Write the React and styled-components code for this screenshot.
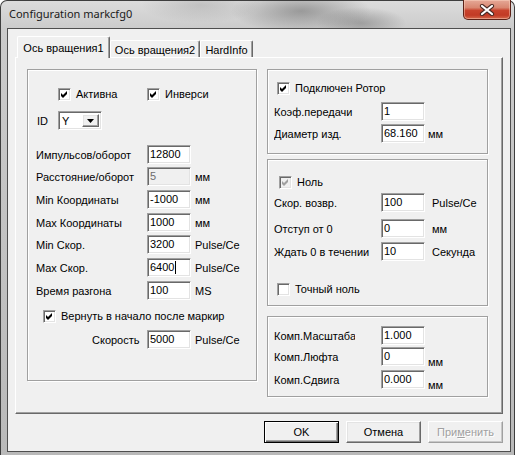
import React from 'react';
import styled, { createGlobalStyle, css } from 'styled-components';

const Global = createGlobalStyle`
  html, body { margin: 0; padding: 0; background: #fff; }
  body { width: 515px; height: 455px; overflow: hidden; }
  *, *::before, *::after { box-sizing: border-box; }
`;

const FONT = `"Liberation Sans", Arial, sans-serif`;

const sunken = css`
  border: 1px solid;
  border-color: #a0a0a0 #ffffff #ffffff #a0a0a0;
  box-shadow: inset 1px 1px 0 #696969, inset -1px -1px 0 #e3e3e3;
`;

const raised = css`
  border: 1px solid;
  border-color: #ffffff #696969 #696969 #ffffff;
  box-shadow: inset -1px -1px 0 #a0a0a0, inset 1px 1px 0 #e3e3e3;
`;

const Window = styled.div`
  width: 515px;
  height: 455px;
  display: flex;
  flex-direction: column;
  border: 1px solid #3e3e3e;
  border-bottom: none;
  border-radius: 7px 7px 0 0;
  padding: 0 3px 3px 6px;
  background:
    radial-gradient(ellipse 70px 22px at 300px 10px, rgba(80, 80, 80, 0.45), transparent),
    radial-gradient(ellipse 45px 16px at 360px 22px, rgba(70, 70, 70, 0.35), transparent),
    radial-gradient(ellipse 60px 18px at 200px 4px, rgba(120, 120, 120, 0.25), transparent),
    linear-gradient(180deg, #dcdcdc 0px, #cbcbcb 28px, #b9b9b9 455px);
`;

const TitleBar = styled.div`
  height: 27px;
  display: flex;
  align-items: flex-start;
  justify-content: space-between;
  flex-shrink: 0;
`;

const TitleText = styled.div`
  margin: 5px 0 0 2px;
  font-family: "Noto Sans", "Open Sans", sans-serif;
  font-size: 11px;
  line-height: 16px;
  color: #1a1a1a;
`;

const CloseButton = styled.div`
  width: 48px;
  height: 20px;
  margin-top: -1px;
  border: 1px solid #5c2218;
  border-top: none;
  border-radius: 0 0 5px 5px;
  background: linear-gradient(180deg, #e5a897 0%, #d98771 40%, #c8432d 55%, #c23a25 80%, #d4694d 100%);
  box-shadow: inset 0 0 0 1px rgba(255, 220, 200, 0.45);
  display: flex;
  align-items: center;
  justify-content: center;
`;

const Client = styled.div`
  flex: 1;
  display: flex;
  flex-direction: column;
  background: #f0f0f0;
  border: 1px solid #4e4e4e;
  padding: 7px 7px 0 7px;
`;

const TabStrip = styled.div`
  display: flex;
  align-items: flex-end;
  height: 21px;
  padding-left: 2px;
  position: relative;
  z-index: 1;
`;

const Tab = styled.div`
  width: ${p => p.$w}px;
  height: ${p => (p.$active ? 22 : 17)}px;
  margin-bottom: ${p => (p.$active ? -1 : 0)}px;
  background: #f0f0f0;
  border-top: 1px solid #ffffff;
  border-left: 1px solid #ffffff;
  border-right: 1px solid #696969;
  box-shadow: inset -1px 0 0 #a0a0a0;
  border-radius: 2px 2px 0 0;
  display: flex;
  align-items: center;
  justify-content: center;
  padding-top: ${p => (p.$active ? 0 : 1)}px;
  font-family: ${FONT};
  font-size: 11px;
  color: #000;
  white-space: nowrap;
`;

const Panel = styled.div`
  height: 357px;
  display: flex;
  gap: 10px;
  padding: 11px 0 0 11px;
  border: 1px solid;
  border-color: #ffffff #696969 #696969 #ffffff;
  box-shadow: inset -1px -1px 0 #a0a0a0;
`;

const Group = styled.div`
  width: ${p => p.$w}px;
  height: ${p => p.$h}px;
  border: 1px solid #a0a0a0;
  box-shadow: inset 1px 1px 0 #ffffff, 1px 1px 0 #ffffff;
  display: flex;
  flex-direction: column;
  flex-shrink: 0;
  font-family: ${FONT};
  font-size: 11px;
  color: #000;
`;

const RightColumn = styled.div`
  display: flex;
  flex-direction: column;
`;

const Spacer = styled.div`
  height: ${p => p.$h}px;
  flex-shrink: 0;
`;

const CheckLine = styled.div`
  display: grid;
  grid-template-columns: ${p => p.$cols || 'auto'};
  margin-top: ${p => p.$mt}px;
  padding-left: ${p => p.$pl}px;
  height: 13px;
  align-items: center;
`;

const CheckItem = styled.div`
  display: flex;
  align-items: center;
  gap: 5px;
  white-space: nowrap;
  line-height: 13px;
`;

const Box = styled.div`
  width: 13px;
  height: 13px;
  ${sunken};
  background: ${p => (p.$disabled ? '#f0f0f0' : '#ffffff')};
  display: flex;
  align-items: center;
  justify-content: center;
  flex-shrink: 0;
`;

const Row = styled.div`
  display: grid;
  grid-template-columns: ${p => p.$label}px 44px auto;
  align-items: center;
  height: 19px;
  margin-top: ${p => p.$mt}px;
  padding-left: ${p => p.$pl}px;
  white-space: nowrap;
`;

const Label = styled.span`
  overflow: hidden;
  width: ${p => (p.$clip ? `${p.$clip}px` : 'auto')};
`;

const Field = styled.div`
  width: 44px;
  height: 19px;
  ${sunken};
  background: ${p => (p.$disabled ? '#f0f0f0' : '#ffffff')};
  color: ${p => (p.$disabled ? '#6d6d6d' : '#000')};
  display: flex;
  align-items: center;
  padding: 0 0 0 2px;
  overflow: hidden;
  line-height: 13px;
`;

const Caret = styled.span`
  display: inline-block;
  width: 1px;
  height: 13px;
  background: #000;
  margin-left: 1px;
`;

const Unit = styled.span`
  margin-left: ${p => p.$ml}px;
  align-self: ${p => (p.$low ? 'end' : 'center')};
  margin-bottom: ${p => (p.$low ? -2 : 0)}px;
`;

const IdRow = styled.div`
  display: grid;
  grid-template-columns: 21px 44px;
  align-items: center;
  height: 19px;
  margin-top: ${p => p.$mt}px;
  padding-left: 9px;
`;

const Combo = styled.div`
  width: 44px;
  height: 19px;
  ${sunken};
  background: #fff;
  display: flex;
  align-items: stretch;
  padding: 2px;
`;

const ComboText = styled.span`
  flex: 1;
  line-height: 15px;
  padding-left: 1px;
`;

const ComboButton = styled.div`
  width: 17px;
  background: #f0f0f0;
  ${raised};
  display: flex;
  align-items: center;
  justify-content: center;
`;

const ButtonBar = styled.div`
  display: flex;
  justify-content: flex-end;
  gap: 7px;
  margin-top: 7px;
`;

const Button = styled.div`
  width: 75px;
  height: 22px;
  background: #f0f0f0;
  display: flex;
  align-items: center;
  justify-content: center;
  font-family: ${FONT};
  font-size: 11px;
  color: ${p => (p.$disabled ? '#a0a0a0' : '#000')};
  text-shadow: ${p => (p.$disabled ? '1px 1px 0 #ffffff' : 'none')};
  ${raised};
  ${p => p.$default && css`
    border: 1px solid #000;
    box-shadow: inset 1px 1px 0 #ffffff, inset -1px -1px 0 #696969, inset -2px -2px 0 #a0a0a0;
  `}
  ${p => p.$disabled && css`
    border-color: #ffffff #a0a0a0 #a0a0a0 #ffffff;
    box-shadow: inset -1px -1px 0 #c8c8c8;
  `}
`;

const Underlined = styled.span`
  text-decoration: underline;
`;

const CheckMark = ({ color = '#000' }) => (
  <svg width="9" height="9" viewBox="0 0 9 9">
    <polygon points="1,3 3,5 7,1 7,4 3,8 1,6" fill={color} />
  </svg>
);

const Check = ({ checked, disabled, children }) => (
  <CheckItem>
    <Box $disabled={disabled}>{checked && <CheckMark color={disabled ? '#a0a0a0' : '#000'} />}</Box>
    <span>{children}</span>
  </CheckItem>
);

const CloseX = () => (
  <svg width="16" height="12" viewBox="0 0 16 12">
    <path d="M3 2 L13 10 M13 2 L3 10" stroke="#4a2a24" strokeWidth="4.2" strokeLinecap="round" />
    <path d="M3 2 L13 10 M13 2 L3 10" stroke="#ffffff" strokeWidth="2.2" strokeLinecap="round" />
  </svg>
);

const Arrow = () => (
  <svg width="7" height="4" viewBox="0 0 7 4">
    <polygon points="0,0 7,0 3.5,4" fill="#000" />
  </svg>
);

const leftRows = [
  { label: 'Импульсов/оборот', value: '12800', mt: 15 },
  { label: 'Расстояние/оборот', value: '5', unit: 'мм', mt: 3, disabled: true },
  { label: 'Min Координаты', value: '-1000', unit: 'мм', mt: 4 },
  { label: 'Max Координаты', value: '1000', unit: 'мм', mt: 4 },
  { label: 'Min Скор.', value: '3200', unit: 'Pulse/Ce', mt: 3 },
  { label: 'Max Скор.', value: '6400', unit: 'Pulse/Ce', mt: 4, caret: true },
  { label: 'Время разгона', value: '100', unit: 'MS', mt: 4 },
];

export default function App() {
  return (
    <>
      <Global />
      <Window>
        <TitleBar>
          <TitleText>Configuration markcfg0</TitleText>
          <CloseButton><CloseX /></CloseButton>
        </TitleBar>
        <Client>
          <TabStrip>
            <Tab $w={93} $active>Ось вращения1</Tab>
            <Tab $w={90}>Ось вращения2</Tab>
            <Tab $w={53}>HardInfo</Tab>
          </TabStrip>
          <Panel>
            <Group $w={230} $h={312}>
              <CheckLine $mt={18} $pl={30} $cols="89px auto">
                <Check checked>Активна</Check>
                <Check checked>Инверси</Check>
              </CheckLine>
              <IdRow $mt={10}>
                <span>ID</span>
                <Combo>
                  <ComboText>Y</ComboText>
                  <ComboButton><Arrow /></ComboButton>
                </Combo>
              </IdRow>
              {leftRows.map(r => (
                <Row key={r.label} $label={111} $pl={8} $mt={r.mt}>
                  <Label>{r.label}</Label>
                  <Field $disabled={r.disabled}>
                    {r.value}
                    {r.caret && <Caret />}
                  </Field>
                  {r.unit && <Unit $ml={4}>{r.unit}</Unit>}
                </Row>
              ))}
              <CheckLine $mt={10} $pl={15}>
                <Check checked>Вернуть в начало после маркир</Check>
              </CheckLine>
              <Row $label={55} $pl={64} $mt={7}>
                <Label>Скорость</Label>
                <Field>5000</Field>
                <Unit $ml={4}>Pulse/Ce</Unit>
              </Row>
            </Group>
            <RightColumn>
              <Group $w={221} $h={85}>
                <CheckLine $mt={12} $pl={9}>
                  <Check checked>Подключен Ротор</Check>
                </CheckLine>
                <Row $label={107} $pl={6} $mt={7}>
                  <Label>Коэф.передачи</Label>
                  <Field>1</Field>
                </Row>
                <Row $label={107} $pl={6} $mt={3}>
                  <Label>Диаметр изд.</Label>
                  <Field>68.160</Field>
                  <Unit $ml={3}>мм</Unit>
                </Row>
              </Group>
              <Spacer $h={5} />
              <Group $w={221} $h={147}>
                <CheckLine $mt={16} $pl={11}>
                  <Check checked disabled>Ноль</Check>
                </CheckLine>
                <Row $label={107} $pl={6} $mt={4}>
                  <Label>Скор. возвр.</Label>
                  <Field>100</Field>
                  <Unit $ml={7}>Pulse/Ce</Unit>
                </Row>
                <Row $label={107} $pl={6} $mt={7}>
                  <Label>Отступ от 0</Label>
                  <Field>0</Field>
                  <Unit $ml={7}>мм</Unit>
                </Row>
                <Row $label={107} $pl={6} $mt={4}>
                  <Label>Ждать 0 в течении</Label>
                  <Field>10</Field>
                  <Unit $ml={7}>Секунда</Unit>
                </Row>
                <CheckLine $mt={22} $pl={9}>
                  <Check>Точный ноль</Check>
                </CheckLine>
              </Group>
              <Spacer $h={10} />
              <Group $w={221} $h={81}>
                <Row $label={107} $pl={6} $mt={9}>
                  <Label $clip={81}>Комп.Масштаба</Label>
                  <Field>1.000</Field>
                </Row>
                <Row $label={107} $pl={6} $mt={2}>
                  <Label>Комп.Люфта</Label>
                  <Field>0</Field>
                  <Unit $ml={3} $low>мм</Unit>
                </Row>
                <Row $label={107} $pl={6} $mt={4}>
                  <Label>Комп.Сдвига</Label>
                  <Field>0.000</Field>
                  <Unit $ml={3} $low>мм</Unit>
                </Row>
              </Group>
            </RightColumn>
          </Panel>
          <ButtonBar>
            <Button $default>OK</Button>
            <Button>Отмена</Button>
            <Button $disabled>При<Underlined>м</Underlined>енить</Button>
          </ButtonBar>
        </Client>
      </Window>
    </>
  );
}
